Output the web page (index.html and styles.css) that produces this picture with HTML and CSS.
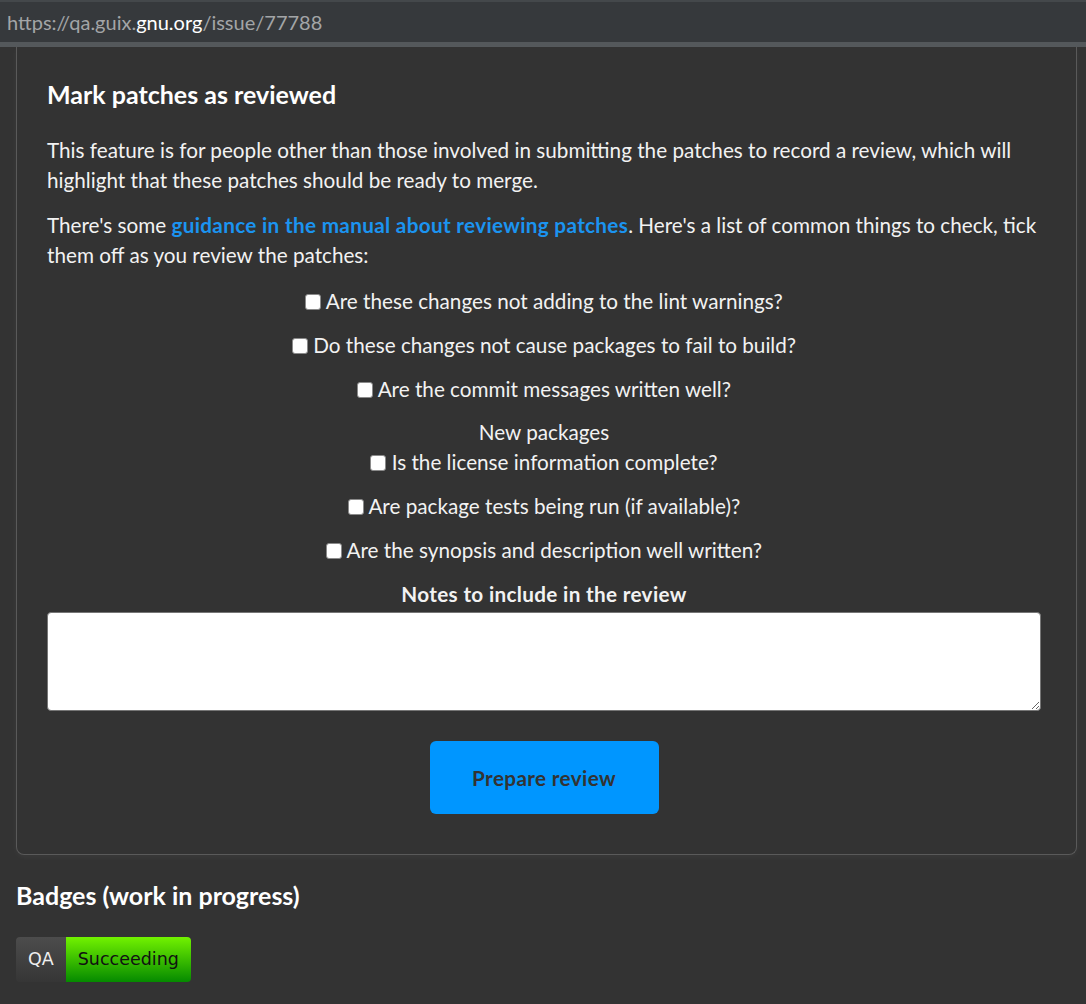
FILE: index.html
```html
<!DOCTYPE html>
<html lang="en">
<head>
<meta charset="utf-8">
<title>Issue 77788</title>
<link rel="stylesheet" href="styles.css">
</head>
<body>
<div class="urlbar">
  <span class="url-dim">https://qa.guix.</span><span class="url-host">gnu.org</span><span class="url-dim">/issue/77788</span>
</div>
<main class="page">
  <section class="card">
    <h3 class="card-title">Mark patches as reviewed</h3>
    <p class="para">This feature is for people other than those involved in submitting the patches to record a review, which will highlight that these patches should be ready to merge.</p>
    <p class="para">There's some <a class="link" href="#">guidance in the manual about reviewing patches</a>. Here's a list of common things to check, tick them off as you review the patches:</p>
    <form class="review-form">
      <div class="check-row"><label><input type="checkbox" class="check"> Are these changes not adding to the lint warnings?</label></div>
      <div class="check-row"><label><input type="checkbox" class="check"> Do these changes not cause packages to fail to build?</label></div>
      <div class="check-row"><label><input type="checkbox" class="check"> Are the commit messages written well?</label></div>
      <div class="group-label">New packages</div>
      <div class="check-row"><label><input type="checkbox" class="check"> Is the license information complete?</label></div>
      <div class="check-row"><label><input type="checkbox" class="check"> Are package tests being run (if available)?</label></div>
      <div class="check-row"><label><input type="checkbox" class="check"> Are the synopsis and description well written?</label></div>
      <div class="notes-label">Notes to include in the review</div>
      <textarea class="notes"></textarea>
      <div class="actions"><button type="button" class="btn">Prepare review</button></div>
    </form>
  </section>
  <h3 class="section-title">Badges (work in progress)</h3>
  <div class="badge"><span class="badge-key">QA</span><span class="badge-val">Succeeding</span></div>
</main>
</body>
</html>
```
FILE: styles.css
```css
html, body {
  margin: 0;
  padding: 0;
  background: #333333;
  color: #f2f2f2;
  font-family: "Lato", "Noto Sans", sans-serif;
  font-size: 20.7px;
  line-height: 30px;
}

.urlbar {
  box-sizing: border-box;
  height: 47px;
  background: #36393c;
  border-top: 2px solid #44484b;
  border-bottom: 5px solid #54585b;
  padding-left: 7px;
  font-size: 20px;
  line-height: 40px;
}
.url-dim { color: #a3a5a7; }
.url-host { color: #ffffff; }

.page {
  padding: 0 9px 0 16px;
}

.card {
  border: 1px solid #5a5a5a;
  border-top: none;
  border-radius: 0 0 8px 8px;
  padding: 33px 35px 40px 30px;
  box-shadow: 0 2px 6px rgba(255, 255, 255, 0.04);
}

.card-title, .section-title {
  margin: 0 0 26px;
  font-size: 25px;
  line-height: 29px;
  font-weight: 700;
  color: #ffffff;
}

.para {
  margin: 0 0 15px;
}

.link {
  color: #1b94f0;
  font-weight: 700;
  letter-spacing: 0.33px;
  text-decoration: none;
}

.review-form {
  margin: 0;
  padding-top: 1px;
  text-align: center;
}

.check-row {
  margin-bottom: 14px;
}

.check {
  appearance: none;
  -webkit-appearance: none;
  width: 16px;
  height: 16px;
  margin: 0;
  background: #ffffff;
  border: 1px solid #8a8a8a;
  border-radius: 3px;
  vertical-align: -1px;
}

.group-label {
  margin-top: -1px;
}

.notes-label {
  font-weight: 700;
  letter-spacing: 0.33px;
  margin-bottom: 3px;
}

.notes {
  display: block;
  box-sizing: border-box;
  width: 100%;
  height: 99px;
  margin: 0;
  border: 1px solid #767676;
  border-radius: 4px;
  background: #ffffff;
  resize: both;
}

.actions {
  margin-top: 30px;
}

.btn {
  width: 229px;
  height: 73px;
  border: none;
  border-radius: 6px;
  background: #0096ff;
  color: #333333;
  font-family: inherit;
  font-size: 20.7px;
  letter-spacing: 0.36px;
  font-weight: 700;
}

.section-title {
  margin: 26px 0 27px;
}

.badge {
  display: inline-flex;
  height: 45px;
  border-radius: 4px;
  overflow: hidden;
  font-family: "DejaVu Sans", sans-serif;
  font-size: 17.5px;
  line-height: 45px;
}
.badge-key {
  padding: 0 12px;
  color: #eeeeee;
  background: linear-gradient(#4c4c4c, #363636);
}
.badge-val {
  padding: 0 12px;
  color: #111111;
  background: linear-gradient(#72f200, #058a00);
}
```
